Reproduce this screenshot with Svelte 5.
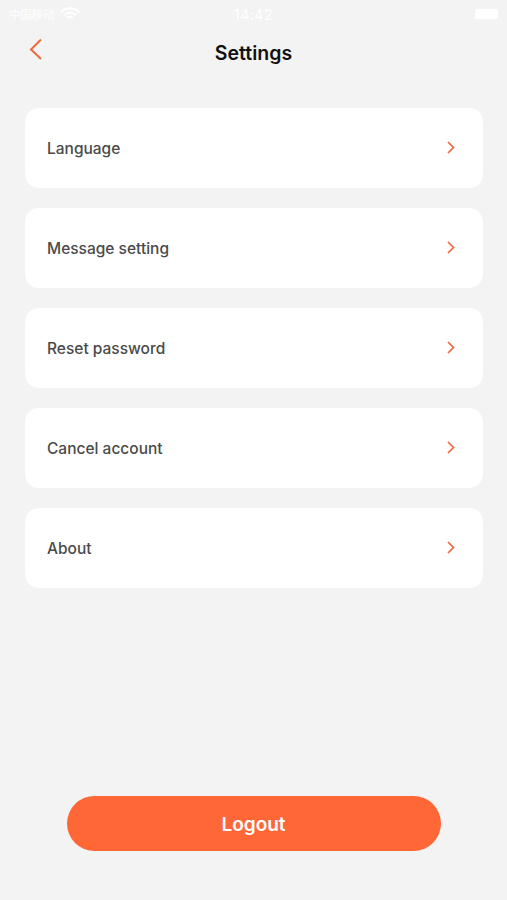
<script>
  const items = ['Language', 'Message setting', 'Reset password', 'Cancel account', 'About'];
</script>

<div class="page">
  <div class="status">
    <div class="left">
      <span class="carrier">中国移动</span>
      <svg class="wifi" viewBox="0 0 20 14" width="20" height="14"><path d="M1 5a13 13 0 0 1 18 0M4 8a8.600 8.600 0 0 1 12 0M7 11a4 4 0 0 1 6 0" fill="none" stroke="#fff" stroke-width="2.200"/></svg>
    </div>
    <span class="time">14:42</span>
    <div class="battery"></div>
  </div>
  <header class="nav">
    <svg class="back" viewBox="0 0 14 22" width="14" height="22"><path d="M12 1.500 2 11.500l10 9.500" fill="none" stroke="#f0683f" stroke-width="2"/></svg>
    <h1>Settings</h1>
  </header>
  <ul class="list">
    {#each items as item}
      <li class="row">
        <span>{item}</span>
        <svg viewBox="0 0 8 13" width="8" height="13"><path d="M1 1l5.500 5.500L1 12" fill="none" stroke="#f0683f" stroke-width="1.700"/></svg>
      </li>
    {/each}
  </ul>
  <button class="logout"><span>Logout</span></button>
</div>

<style>
  :global(body) { margin: 0; background: #f3f3f3; }
  .page {
    height: 900px;
    box-sizing: border-box;
    display: flex;
    flex-direction: column;
    background: #f3f3f3;
    font-family: Inter, "Noto Sans CJK SC", sans-serif;
    overflow: hidden;
  }
  .status {
    height: 28px;
    display: flex;
    align-items: center;
    justify-content: space-between;
    padding: 0 9px;
    color: #fff;
    position: relative;
  }
  .left { display: flex; align-items: center; gap: 6px; width: 80px; }
  .carrier { font-size: 11.500px; white-space: nowrap; letter-spacing: -0.200px; }
  .time { font-size: 14px; letter-spacing: 0.500px; position: absolute; left: 0; right: 0; text-align: center; }
  .battery { width: 23px; height: 10px; background: #fff; border-radius: 2px; }
  .nav {
    height: 50px;
    position: relative;
    display: flex;
    align-items: center;
    justify-content: center;
  }
  .back { position: absolute; left: 29px; top: 10px; }
  h1 { margin: 0; font-size: 19.500px; font-weight: 600; color: #111; }
  .list {
    list-style: none;
    margin: 30px 24px 0 25px;
    padding: 0;
    display: flex;
    flex-direction: column;
    gap: 20px;
  }
  .row {
    height: 80px;
    box-sizing: border-box;
    padding: 0 28px 0 22px;
    background: #fff;
    border-radius: 14px;
    display: flex;
    align-items: center;
    justify-content: space-between;
    font-size: 15.500px;
    font-weight: 500;
    color: #4a4a4a;
  }
  .row svg { position: relative; top: -1px; }
  .logout {
    margin: 208px auto 0;
    width: 374px;
    height: 55px;
    border: 0;
    border-radius: 28px;
    background: #ff6737;
    color: #fff;
    font: 600 19px Inter, sans-serif;
    padding: 2px 0 0;
  }
</style>
